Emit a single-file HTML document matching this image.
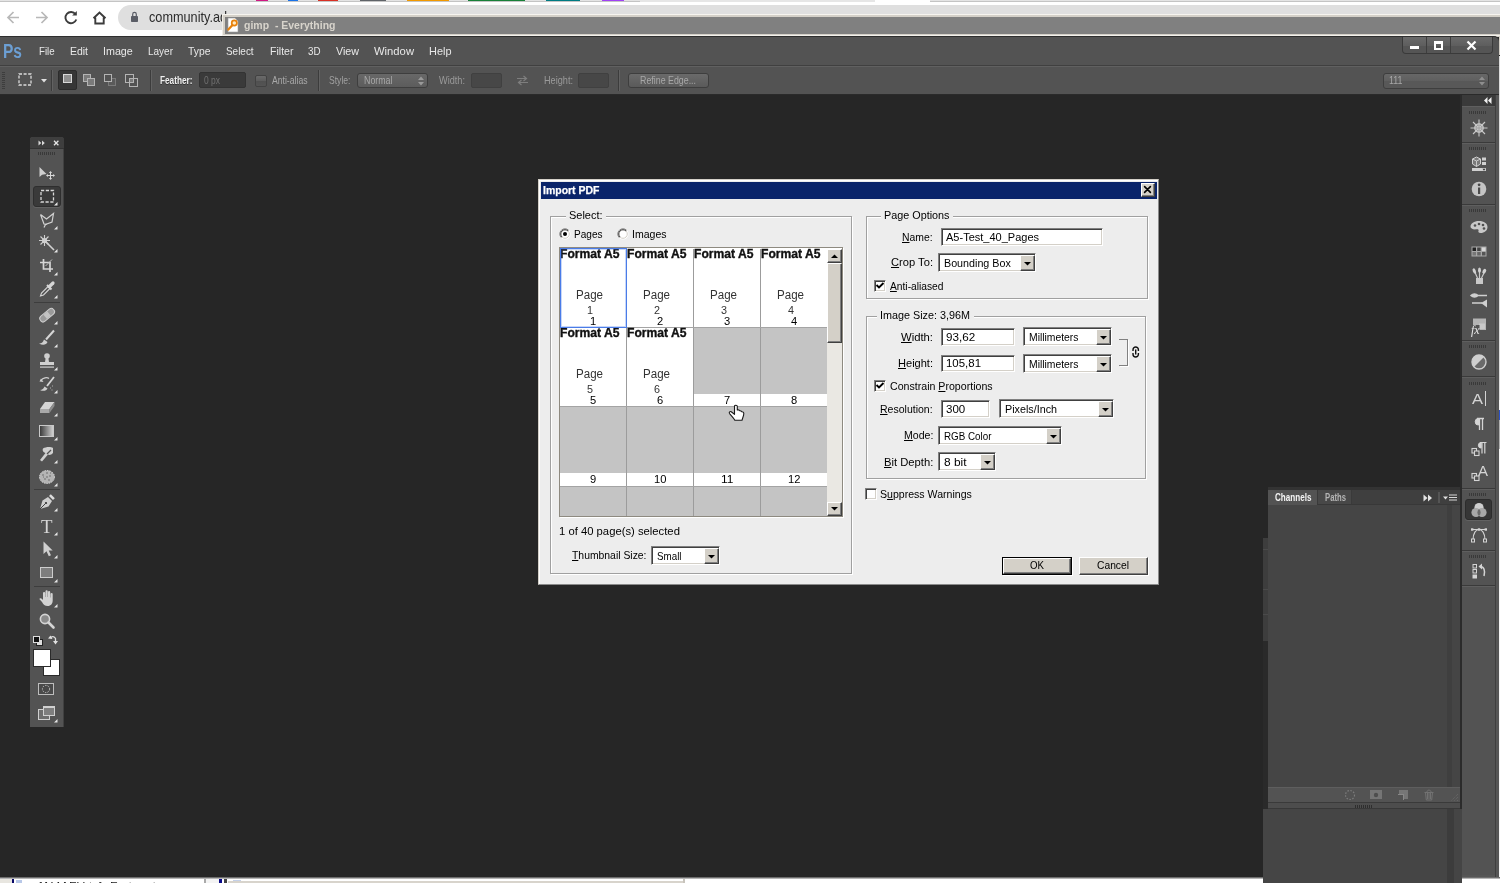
<!DOCTYPE html>
<html>
<head>
<meta charset="utf-8">
<title>Import PDF</title>
<style>
*{box-sizing:border-box;margin:0;padding:0}
html,body{width:1500px;height:883px;overflow:hidden;background:#262626;font-family:"Liberation Sans",sans-serif;}
.abs{position:absolute}
.t{position:absolute;white-space:pre;transform-origin:0 50%;display:block}
.sf{font-family:"Liberation Serif",serif}
.t u{text-decoration:underline;text-underline-offset:1px}
svg{position:absolute;overflow:visible}
#root{will-change:transform;position:absolute;left:0;top:0;width:1500px;height:883px;overflow:hidden;background:#262626}
/* win classic bits */
.sunk{background:#fff;border:1px solid;border-color:#808080 #fff #fff #808080;box-shadow:inset 1px 1px 0 #404040,inset -1px -1px 0 #d4d0c8}
.btn{background:#d4d0c8;border:1px solid;border-color:#fff #404040 #404040 #fff;box-shadow:inset -1px -1px 0 #808080,inset 1px 1px 0 #d4d0c8}
.grp{border:1px solid #a0a0a0;box-shadow:inset 1px 1px 0 #fff,1px 1px 0 #fff}
.chk{background:#fff;border:1px solid;border-color:#808080 #fff #fff #808080;box-shadow:inset 1px 1px 0 #404040,inset -1px -1px 0 #d4d0c8}
</style>
</head>
<body>
<div id="root">
<div class="abs " style="left:0px;top:0px;width:1500px;height:37px;background:#fff"></div>
<div class="abs " style="left:0px;top:0px;width:1500px;height:1px;background:#e4e4e4"></div>
<div class="abs " style="left:0px;top:1px;width:1500px;height:1px;background:#c4c4c4"></div>
<div class="abs " style="left:256px;top:0px;width:12px;height:1.4px;background:#d01884"></div>
<div class="abs " style="left:288px;top:0px;width:10px;height:1.4px;background:#1a73e8"></div>
<div class="abs " style="left:318px;top:0px;width:20px;height:1.4px;background:#d93025"></div>
<div class="abs " style="left:360px;top:0px;width:26px;height:1.4px;background:#5f6368"></div>
<div class="abs " style="left:407px;top:0px;width:42px;height:1.4px;background:#f29900"></div>
<div class="abs " style="left:468px;top:0px;width:57px;height:1.4px;background:#188038"></div>
<div class="abs " style="left:546px;top:0px;width:34px;height:1.4px;background:#007b83"></div>
<div class="abs " style="left:602px;top:0px;width:22px;height:1.4px;background:#a142f4"></div>
<div class="abs " style="left:640px;top:0px;width:235px;height:2px;background:#e6e6e6"></div>
<div class="abs " style="left:875px;top:0px;width:55px;height:2px;background:#fff"></div>
<div class="abs " style="left:118px;top:5px;width:1402px;height:25px;background:#dfdfdf;border-radius:13px"></div>
<svg style="left:0;top:0" width="120" height="36" viewBox="0 0 120 36" fill="none" stroke-linecap="butt">
<g stroke="#b8b8b8" stroke-width="1.7"><path d="M19 17.5H8M13.5 12l-5.5 5.5 5.5 5.5"/><path d="M36 17.5h11M41.500 12l5.500 5.500-5.500 5.500"/></g>
<g stroke="#3c3c3c" stroke-width="1.9"><path d="M75.500 14.200A5.600 5.600 0 1 0 76.300 19.500"/><path d="M76.800 11v4.600h-4.600" fill="#3c3c3c" stroke="none"/>
<path d="M93.500 18.200L99.500 12.500l6 5.700M95.300 17.500v6h8.400v-6" stroke-linejoin="miter"/></g>
<g><rect x="131" y="16" width="7" height="6" rx="0.800" fill="#5a5d66"/><path d="M132.700 16v-1.800a1.800 1.800 0 0 1 3.600 0V16" stroke="#5a5d66" stroke-width="1.200"/></g>
</svg>
<span class="t" style="left:149.0px;top:10.4px;font-size:14.5px;line-height:14.5px;color:#2a2a2a;transform:scaleX(0.8753);">community.ad</span>
<div class="abs " style="left:222px;top:14px;width:1278px;height:23px;background:#d4d0c8;border-left:1px solid #efece6;border-top:1px solid #f6f4ef"></div>
<div class="abs " style="left:225px;top:17px;width:1275px;height:17px;background:#808080"></div>
<div class="abs " style="left:223px;top:35px;width:1277px;height:1px;background:#f3f1ec"></div>
<svg style="left:226px;top:17px" width="14" height="16" viewBox="0 0 14 16"><path d="M2 1h7l3 3v11H2z" fill="#fff" stroke="#9a9a9a" stroke-width=".6"/><circle cx="8.300" cy="6" r="2.600" fill="#ffe9c4" stroke="#e8820c" stroke-width="1.700"/><path d="M6.300 8.200L2.300 12.600" stroke="#e8820c" stroke-width="2.200" stroke-linecap="round"/></svg>
<span class="t" style="left:243.5px;top:19.9px;font-size:11.5px;line-height:11.5px;color:#d8d4cc;font-weight:bold;transform:scaleX(0.9121);">gimp  - Everything</span>
<div class="abs " style="left:0px;top:36px;width:1499px;height:30px;background:#535353;border-top:1px solid #2e2e2e;border-bottom:1px solid #404040;border-top-right-radius:5px"></div>
<div class="abs " style="left:1499px;top:36px;width:1px;height:847px;background:#f4f4f4"></div>
<div class="abs " style="left:1499px;top:36px;width:1px;height:19px;background:#d4d0c8"></div>
<div class="abs " style="left:1499px;top:55px;width:1px;height:1px;background:#222"></div>
<div class="abs " style="left:1499px;top:56px;width:1px;height:344px;background:#dcdcdc"></div>
<div class="abs " style="left:1499px;top:410px;width:1px;height:10px;background:#2a50c8"></div>
<div class="abs " style="left:1499px;top:420px;width:1px;height:29px;background:#b0b0b0"></div>
<div class="abs " style="left:0px;top:66px;width:1499px;height:29px;background:#535353;border-top:1px solid #606060;border-bottom:1px solid #2a2a2a"></div>
<span class="t" style="left:3.0px;top:40.7px;font-size:20px;line-height:20px;color:#6c9fd4;font-weight:bold;transform:scaleX(0.7766);">Ps</span>
<span class="t" style="left:39.4px;top:45.9px;font-size:11.5px;line-height:11.5px;color:#e8e8e8;transform:scaleX(0.8418);">File</span>
<span class="t" style="left:70.0px;top:45.9px;font-size:11.5px;line-height:11.5px;color:#e8e8e8;transform:scaleX(0.9083);">Edit</span>
<span class="t" style="left:102.6px;top:45.9px;font-size:11.5px;line-height:11.5px;color:#e8e8e8;transform:scaleX(0.9323);">Image</span>
<span class="t" style="left:148.0px;top:45.9px;font-size:11.5px;line-height:11.5px;color:#e8e8e8;transform:scaleX(0.8690);">Layer</span>
<span class="t" style="left:188.0px;top:45.9px;font-size:11.5px;line-height:11.5px;color:#e8e8e8;transform:scaleX(0.8984);">Type</span>
<span class="t" style="left:226.4px;top:45.9px;font-size:11.5px;line-height:11.5px;color:#e8e8e8;transform:scaleX(0.8635);">Select</span>
<span class="t" style="left:270.0px;top:45.9px;font-size:11.5px;line-height:11.5px;color:#e8e8e8;transform:scaleX(0.9195);">Filter</span>
<span class="t" style="left:307.5px;top:45.9px;font-size:11.5px;line-height:11.5px;color:#e8e8e8;transform:scaleX(0.8503);">3D</span>
<span class="t" style="left:336.0px;top:45.9px;font-size:11.5px;line-height:11.5px;color:#e8e8e8;transform:scaleX(0.9304);">View</span>
<span class="t" style="left:374.0px;top:45.9px;font-size:11.5px;line-height:11.5px;color:#e8e8e8;transform:scaleX(0.9779);">Window</span>
<span class="t" style="left:429.0px;top:45.9px;font-size:11.5px;line-height:11.5px;color:#e8e8e8;transform:scaleX(0.9513);">Help</span>
<div class="abs " style="left:1402px;top:37px;width:91px;height:17px;background:linear-gradient(#6a6a6a,#5e5e5e 55%,#555 56%,#555);border:1px solid #3a3a3a;border-top:none;border-radius:0 0 4px 4px"></div>
<div class="abs " style="left:1426px;top:37px;width:1px;height:16px;background:#3e3e3e"></div>
<div class="abs " style="left:1450px;top:37px;width:1px;height:16px;background:#3e3e3e"></div>
<div class="abs " style="left:1410px;top:46px;width:9px;height:3px;background:#fff"></div>
<div class="abs " style="left:1434px;top:41px;width:9px;height:9px;border:2px solid #fff;border-top-width:3px"></div>
<svg style="left:1466px;top:41px" width="11" height="9" viewBox="0 0 11 9"><path d="M1.500 .5l8 8M9.500 .5l-8 8" stroke="#fff" stroke-width="2.200"/></svg>
<div class="abs " style="left:2px;top:72px;width:3px;height:17px;background:repeating-linear-gradient(#3b3b3b 0 1px,transparent 1px 2px);opacity:.9"></div>
<svg style="left:18px;top:73px" width="14" height="13" viewBox="0 0 14 13"><rect x="1" y="1" width="12" height="11" fill="none" stroke="#dcdcdc" stroke-width="1.300" stroke-dasharray="3 1.600"/></svg>
<svg style="left:41px;top:79px" width="6" height="4" viewBox="0 0 6 4"><path d="M0 0h6L3 3.500z" fill="#e0e0e0"/></svg>
<div class="abs " style="left:51px;top:70px;width:1px;height:21px;background:#3c3c3c"></div>
<div class="abs " style="left:52px;top:70px;width:1px;height:21px;background:#626262"></div>
<div class="abs " style="left:58px;top:70px;width:19px;height:20px;background:#363636;border:1px solid #2c2c2c;border-radius:2px"></div>
<div class="abs " style="left:63px;top:74px;width:9px;height:9px;background:#8f8f8f;border:1px solid #d8d8d8"></div>
<div class="abs " style="left:83px;top:74px;width:8px;height:8px;background:#7a7a7a;border:1px solid #b4b4b4"></div>
<div class="abs " style="left:87px;top:78px;width:8px;height:8px;background:#7a7a7a;border:1px solid #b4b4b4"></div>
<div class="abs " style="left:108px;top:78px;width:8px;height:8px;background:#5a5a5a;border:1px solid #7a7a7a"></div>
<div class="abs " style="left:104px;top:74px;width:8px;height:8px;background:#535353;border:1px solid #b4b4b4"></div>
<div class="abs " style="left:125px;top:74px;width:9px;height:9px;border:1px solid #b4b4b4"></div>
<div class="abs " style="left:129px;top:78px;width:9px;height:9px;border:1px solid #b4b4b4"></div>
<div class="abs " style="left:129px;top:78px;width:5px;height:5px;background:#7a7a7a;border:1px solid #b4b4b4"></div>
<div class="abs " style="left:150px;top:70px;width:1px;height:21px;background:#3c3c3c"></div>
<div class="abs " style="left:151px;top:70px;width:1px;height:21px;background:#626262"></div>
<span class="t" style="left:160.0px;top:74.9px;font-size:10.5px;line-height:10.5px;color:#f0f0f0;font-weight:bold;transform:scaleX(0.7845);text-shadow:0 1px 0 #333;">Feather:</span>
<div class="abs " style="left:199px;top:72px;width:47px;height:16px;background:#3a3a3a;border:1px solid #333;border-radius:2px"></div>
<span class="t" style="left:204.0px;top:75.4px;font-size:10.5px;line-height:10.5px;color:#707070;transform:scaleX(0.8062);">0 px</span>
<div class="abs " style="left:255px;top:75px;width:12px;height:12px;background:linear-gradient(#6a6a6a,#5c5c5c 50%,#505050 51%,#545454);border:1px solid #424242;border-radius:2px"></div>
<span class="t" style="left:271.5px;top:74.9px;font-size:10.5px;line-height:10.5px;color:#a8a8a8;transform:scaleX(0.8220);">Anti-alias</span>
<div class="abs " style="left:318px;top:70px;width:1px;height:21px;background:#3c3c3c"></div>
<div class="abs " style="left:319px;top:70px;width:1px;height:21px;background:#626262"></div>
<span class="t" style="left:328.5px;top:74.9px;font-size:10.5px;line-height:10.5px;color:#a0a0a0;transform:scaleX(0.8187);">Style:</span>
<div class="abs " style="left:357px;top:73px;width:71px;height:15px;background:linear-gradient(#686868,#5c5c5c);border:1px solid #3e3e3e;border-radius:3px"></div>
<span class="t" style="left:364.0px;top:75.4px;font-size:10.5px;line-height:10.5px;color:#a8a8a8;transform:scaleX(0.8422);">Normal</span>
<svg style="left:418px;top:76px" width="6" height="10" viewBox="0 0 6 10"><path d="M0 4h6L3 .5zM0 6h6L3 9.500z" fill="#9a9a9a"/></svg>
<span class="t" style="left:439.0px;top:74.9px;font-size:10.5px;line-height:10.5px;color:#9a9a9a;transform:scaleX(0.8737);">Width:</span>
<div class="abs " style="left:471px;top:73px;width:31px;height:15px;background:#474747;border:1px solid #404040;border-radius:2px"></div>
<svg style="left:516px;top:75px" width="13" height="11" viewBox="0 0 13 11"><path d="M1 3.500h9M7.500 1l3 2.500-3 2.500M12 7.500H3M5.500 5l-3 2.500 3 2.500" fill="none" stroke="#7e7e7e" stroke-width="1.200"/></svg>
<span class="t" style="left:544.0px;top:74.9px;font-size:10.5px;line-height:10.5px;color:#9a9a9a;transform:scaleX(0.8717);">Height:</span>
<div class="abs " style="left:578px;top:73px;width:31px;height:15px;background:#474747;border:1px solid #404040;border-radius:2px"></div>
<div class="abs " style="left:618px;top:70px;width:1px;height:21px;background:#3c3c3c"></div>
<div class="abs " style="left:619px;top:70px;width:1px;height:21px;background:#626262"></div>
<div class="abs " style="left:628px;top:73px;width:81px;height:15px;background:linear-gradient(#6a6a6a,#5a5a5a);border:1px solid #3e3e3e;border-radius:3px"></div>
<span class="t" style="left:640.0px;top:74.9px;font-size:10.5px;line-height:10.5px;color:#a8a8a8;transform:scaleX(0.8416);">Refine Edge...</span>
<div class="abs " style="left:1383px;top:73px;width:106px;height:16px;background:linear-gradient(#676767,#5f5f5f 50%,#585858 51%,#585858);border:1px solid #3e3e3e;border-radius:3px"></div>
<span class="t" style="left:1389.0px;top:76.1px;font-size:10px;line-height:10px;color:#a8a8a8;transform:scaleX(0.8881);">111</span>
<svg style="left:1479px;top:76px" width="6" height="10" viewBox="0 0 6 10"><path d="M0 4h6L3 .5zM0 6h6L3 9.500z" fill="#8e8e8e"/></svg>
<div class="abs " style="left:30px;top:137px;width:34px;height:590px;background:#535353;border-radius:3px 3px 0 0;border-right:1px solid #404040"></div>
<div class="abs " style="left:30px;top:137px;width:34px;height:12px;background:#3e3e3e;border-radius:3px 3px 0 0;border-bottom:1px solid #333"></div>
<svg style="left:37px;top:139px" width="24" height="8" viewBox="0 0 24 8"><path d="M1.500 1.500l2.800 2.500-2.800 2.500zM5 1.500l2.800 2.500-2.800 2.500z" fill="#d8d8d8"/><path d="M17 1.800l4.400 4.400M21.400 1.800l-4.400 4.400" stroke="#e4e4e4" stroke-width="1.300"/></svg>
<div class="abs " style="left:38px;top:152px;width:18px;height:3px;background:repeating-linear-gradient(90deg,#393939 0 1px,transparent 1px 2px)"></div>
<svg style="left:38px;top:164px" width="18" height="18" viewBox="0 0 18 18" fill="none"><path d="M1.500 3l0 10 2.600-2.300 4.400-.7z" fill="#cfcfcf"/><path d="M12.500 8v7M9 11.500h7" stroke="#d8d8d8" stroke-width="1"/><path d="M12.500 7l-1.600 1.900h3.200zM12.500 16l-1.600-1.900h3.200zM8 11.500l1.900-1.600v3.200zM17 11.500l-1.900-1.600v3.200z" fill="#d8d8d8"/></svg>
<div class="abs " style="left:33px;top:186px;width:28px;height:21px;background:#3a3a3a;border:1px solid #2e2e2e;border-radius:3px;box-shadow:0 1px 0 #626262"></div>
<svg style="left:38px;top:187px" width="18" height="18" viewBox="0 0 18 18" fill="none"><rect x="3" y="3.500" width="12.500" height="11.500" stroke="#d8d8d8" stroke-width="1.300" stroke-dasharray="3.200 1.600"/></svg>
<svg style="left:54px;top:201.5px" width="4" height="4" viewBox="0 0 4 4"><path d="M3.500 0v3.500H0z" fill="#e6e6e6"/></svg>
<svg style="left:38px;top:211px" width="18" height="18" viewBox="0 0 18 18" fill="none"><path d="M2.500 3.500l6 4.500 7-5.500-1.500 8.500-6.500 2.500-1.500 3M2.500 3.500l3.500 9.500 3 .5" stroke="#d2d2d2" stroke-width="1.200"/></svg>
<svg style="left:54px;top:225.5px" width="4" height="4" viewBox="0 0 4 4"><path d="M3.500 0v3.500H0z" fill="#e6e6e6"/></svg>
<svg style="left:38px;top:234px" width="18" height="18" viewBox="0 0 18 18" fill="none"><path d="M7 7l9 9" stroke="#d2d2d2" stroke-width="1.600"/><path d="M6.500 1v11M1 6.500h11M2.500 2.500l8 8M10.500 2.500l-8 8" stroke="#cfcfcf" stroke-width="1.100"/><circle cx="6.500" cy="6.500" r="2.600" fill="#cfcfcf"/></svg>
<svg style="left:54px;top:248.5px" width="4" height="4" viewBox="0 0 4 4"><path d="M3.500 0v3.500H0z" fill="#e6e6e6"/></svg>
<svg style="left:38px;top:257px" width="18" height="18" viewBox="0 0 18 18" fill="none"><path d="M5.500 2v10h9.500M2 5.500h10v9.500" stroke="#d6d6d6" stroke-width="1.700"/><path d="M14 2.500l-6.500 6.500" stroke="#bdbdbd" stroke-width="1"/></svg>
<svg style="left:54px;top:271.5px" width="4" height="4" viewBox="0 0 4 4"><path d="M3.500 0v3.500H0z" fill="#e6e6e6"/></svg>
<svg style="left:38px;top:280px" width="18" height="18" viewBox="0 0 18 18" fill="none"><path d="M2.500 16l1-3 6.500-6.500 2 2-6.500 6.500z" stroke="#d6d6d6" stroke-width="1.100"/><path d="M9 5l4.500 4.500" stroke="#d6d6d6" stroke-width="2"/><path d="M11.500 6.500l3.500-3.500" stroke="#d6d6d6" stroke-width="3.200" stroke-linecap="round"/></svg>
<svg style="left:54px;top:294.5px" width="4" height="4" viewBox="0 0 4 4"><path d="M3.500 0v3.500H0z" fill="#e6e6e6"/></svg>
<div class="abs " style="left:34px;top:302px;width:26px;height:1px;background:#3d3d3d"></div>
<svg style="left:38px;top:306px" width="18" height="18" viewBox="0 0 18 18" fill="none"><rect x=".5" y="6" width="17" height="6.500" rx="3" transform="rotate(-40 9 9)" fill="#9a9a9a" stroke="#cdcdcd" stroke-width="1"/><rect x="6.500" y="6.500" width="5" height="5.500" transform="rotate(-40 9 9)" fill="#c4c4c4"/></svg>
<svg style="left:54px;top:320.5px" width="4" height="4" viewBox="0 0 4 4"><path d="M3.500 0v3.500H0z" fill="#e6e6e6"/></svg>
<svg style="left:38px;top:329px" width="18" height="18" viewBox="0 0 18 18" fill="none"><path d="M16 1.500L8 10.500" stroke="#d6d6d6" stroke-width="2"/><path d="M1 14.500c3 0 4-1.500 5-4l3.500 2.500c-1 3-5 3.500-8.500 1.500z" fill="#cfcfcf"/></svg>
<svg style="left:54px;top:343.5px" width="4" height="4" viewBox="0 0 4 4"><path d="M3.500 0v3.500H0z" fill="#e6e6e6"/></svg>
<svg style="left:38px;top:352px" width="18" height="18" viewBox="0 0 18 18" fill="none"><circle cx="9" cy="4" r="2.800" fill="#cfcfcf"/><path d="M7.800 5h2.400l.8 5h-4z" fill="#cfcfcf"/><rect x="2" y="10" width="14" height="3" fill="#cfcfcf"/><rect x="2" y="14.500" width="14" height="1.200" fill="#cfcfcf"/></svg>
<svg style="left:54px;top:366.5px" width="4" height="4" viewBox="0 0 4 4"><path d="M3.500 0v3.500H0z" fill="#e6e6e6"/></svg>
<svg style="left:38px;top:375px" width="18" height="18" viewBox="0 0 18 18" fill="none"><path d="M16 2L9 11" stroke="#d6d6d6" stroke-width="1.800"/><path d="M2 15c2.500 0 3.500-1.500 4.500-3.500l3 2c-1 2.500-4.500 3-7.500 1.500z" fill="#cfcfcf"/><path d="M3 5.500c2-3 6-3.500 8-2" stroke="#cfcfcf" stroke-width="1.300"/><path d="M1.500 6.500l4 .5-2.500-3.500z" fill="#cfcfcf"/><path d="M12 13l1 0M14 11l1 0M13.500 15l1 0" stroke="#b0b0b0"/></svg>
<svg style="left:54px;top:389.5px" width="4" height="4" viewBox="0 0 4 4"><path d="M3.500 0v3.500H0z" fill="#e6e6e6"/></svg>
<svg style="left:38px;top:398px" width="18" height="18" viewBox="0 0 18 18" fill="none"><path d="M2 11l5-7h9.500l-5 7z" fill="#d4d4d4"/><path d="M2 11h9.500v4H2z" fill="#a8a8a8"/><path d="M11.500 11l5-7v4l-5 7z" fill="#8c8c8c"/></svg>
<svg style="left:54px;top:412.5px" width="4" height="4" viewBox="0 0 4 4"><path d="M3.500 0v3.500H0z" fill="#e6e6e6"/></svg>
<div class="abs" style="left:39px;top:425px;width:15px;height:12px;border:1px solid #c8c8c8;background:linear-gradient(90deg,#3a3a3a,#d0d0d0)"></div>
<svg style="left:54px;top:436.5px" width="4" height="4" viewBox="0 0 4 4"><path d="M3.500 0v3.500H0z" fill="#e6e6e6"/></svg>
<svg style="left:38px;top:445px" width="18" height="18" viewBox="0 0 18 18" fill="none"><path d="M5 3.500c3-2 8-2 10-.5v5c-1.500 2-4 2.500-5 1.500l-6 7-2-1.500 5.500-7c-2-.5-3.500-2.500-2.500-4.500z" fill="#cfcfcf"/><path d="M9 9l4-4" stroke="#535353" stroke-width="1.200"/></svg>
<svg style="left:54px;top:459.5px" width="4" height="4" viewBox="0 0 4 4"><path d="M3.500 0v3.500H0z" fill="#e6e6e6"/></svg>
<svg style="left:38px;top:468px" width="18" height="18" viewBox="0 0 18 18" fill="none"><ellipse cx="9" cy="9" rx="7.500" ry="6.500" fill="#b4b4b4"/><ellipse cx="9" cy="9" rx="7.500" ry="6.500" fill="none" stroke="#d8d8d8" stroke-width="1" stroke-dasharray="1.500 1"/><path d="M4 7h2M8 5h2M11 8h2M6 11h2M10 12h2M12 5h1M5 9h1M8 9h2" stroke="#6e6e6e" stroke-width="1"/></svg>
<svg style="left:54px;top:482.5px" width="4" height="4" viewBox="0 0 4 4"><path d="M3.500 0v3.500H0z" fill="#e6e6e6"/></svg>
<div class="abs " style="left:34px;top:489px;width:26px;height:1px;background:#3d3d3d"></div>
<svg style="left:38px;top:493px" width="18" height="18" viewBox="0 0 18 18" fill="none"><path d="M2 16l2.500-8.500 5.500-3.500 4 4-3.500 5.500z" fill="#cfcfcf"/><path d="M11 3l4 4 1.800-1.800-4-4z" fill="#dcdcdc"/><path d="M2 16l5.500-5.500" stroke="#444" stroke-width="1"/><circle cx="8" cy="10" r="1.100" fill="#333"/></svg>
<svg style="left:54px;top:507.5px" width="4" height="4" viewBox="0 0 4 4"><path d="M3.500 0v3.500H0z" fill="#e6e6e6"/></svg>
<span class="t sf" style="left:41.0px;top:516.7px;font-size:19px;line-height:19px;color:#d6d6d6;transform:scaleX(0.9908);">T</span>
<svg style="left:54px;top:531.5px" width="4" height="4" viewBox="0 0 4 4"><path d="M3.500 0v3.500H0z" fill="#e6e6e6"/></svg>
<svg style="left:38px;top:540px" width="18" height="18" viewBox="0 0 18 18" fill="none"><path d="M5.500 1.500v12.500l3-2.800 2.300 5 2.200-1-2.300-4.800h4z" fill="#cfcfcf"/></svg>
<svg style="left:54px;top:554.5px" width="4" height="4" viewBox="0 0 4 4"><path d="M3.500 0v3.500H0z" fill="#e6e6e6"/></svg>
<div class="abs " style="left:40px;top:567px;width:13px;height:11px;background:#7e7e7e;border:1px solid #cdcdcd"></div>
<svg style="left:54px;top:578.5px" width="4" height="4" viewBox="0 0 4 4"><path d="M3.500 0v3.500H0z" fill="#e6e6e6"/></svg>
<div class="abs " style="left:34px;top:586px;width:26px;height:1px;background:#3d3d3d"></div>
<svg style="left:38px;top:589px" width="18" height="18" viewBox="0 0 18 18" fill="none"><path d="M5 9.500V4a1.100 1.100 0 0 1 2.200 0v4h.3V2.300a1.100 1.100 0 0 1 2.200 0V8h.3V3a1.100 1.100 0 0 1 2.200 0v5.500h.3V5a1.100 1.100 0 0 1 2.200 0v6.500c0 3-1.700 5.500-5 5.500-3 0-4.300-1.500-5.700-4L1.300 10c.8-1.200 2.200-.8 3.700 1z" fill="#d2d2d2"/></svg>
<svg style="left:54px;top:603.5px" width="4" height="4" viewBox="0 0 4 4"><path d="M3.500 0v3.500H0z" fill="#e6e6e6"/></svg>
<svg style="left:38px;top:612px" width="18" height="18" viewBox="0 0 18 18" fill="none"><circle cx="7" cy="7" r="4.600" fill="#8a8a8a" stroke="#d4d4d4" stroke-width="1.600"/><path d="M10.500 10.500l5 5" stroke="#d4d4d4" stroke-width="2.600" stroke-linecap="round"/></svg>
<div class="abs " style="left:36px;top:639px;width:7px;height:7px;background:#ddd;border:1px solid #222"></div>
<div class="abs " style="left:33px;top:636px;width:7px;height:7px;background:#111;border:1px solid #ddd"></div>
<svg style="left:48px;top:634px" width="11" height="11" viewBox="0 0 11 11" fill="none"><path d="M2.500 4c1-2 4-2 5 .5v3" stroke="#e0e0e0" stroke-width="1.300"/><path d="M0 4.500l2.500-3 2 3.500zM5 7h5l-2.500 3.500z" fill="#e0e0e0"/></svg>
<div class="abs " style="left:43px;top:659px;width:17px;height:17px;background:#fff;border:1px solid #2a2a2a;box-shadow:inset 0 0 0 1px #fff"></div>
<div class="abs " style="left:33px;top:649px;width:18px;height:18px;background:#fff;border:1px solid #2a2a2a"></div>
<div class="abs " style="left:38px;top:683px;width:16px;height:12px;border:1px solid #bdbdbd;background:#4a4a4a"></div>
<svg style="left:41px;top:684px" width="10" height="10" viewBox="0 0 10 10"><circle cx="5" cy="5" r="3.600" fill="none" stroke="#c8c8c8" stroke-width="1" stroke-dasharray="1.400 1.200"/></svg>
<div class="abs " style="left:38px;top:709px;width:12px;height:11px;background:#6e6e6e;border:1px solid #d0d0d0"></div>
<div class="abs " style="left:43px;top:706px;width:12px;height:10px;background:#7e7e7e;border:1px solid #d0d0d0;border-top-width:2px"></div>
<svg style="left:54px;top:718.5px" width="4" height="4" viewBox="0 0 4 4"><path d="M3.500 0v3.500H0z" fill="#e6e6e6"/></svg>
<div class="abs " style="left:1460px;top:95px;width:39px;height:782px;background:#565656;border-left:2px solid #2b2b2b"></div>
<div class="abs " style="left:1462px;top:95px;width:33px;height:780px;background:#535353"></div>
<div class="abs " style="left:1495px;top:95px;width:1px;height:782px;background:#3f3f3f"></div>
<div class="abs " style="left:1462px;top:95px;width:33px;height:11px;background:#3a3a3a"></div>
<svg style="left:1484px;top:97px" width="8" height="7" viewBox="0 0 8 7"><path d="M3.500 0v7L0 3.500zM7.500 0v7L4 3.500z" fill="#f0f0f0"/></svg>
<div class="abs " style="left:1462px;top:106px;width:33px;height:1px;background:#5f5f5f"></div>
<div class="abs " style="left:1469px;top:111px;width:18px;height:3px;background:repeating-linear-gradient(90deg,#393939 0 1px,transparent 1px 2px)"></div>
<svg style="left:1470px;top:118.5px" width="18" height="18" viewBox="0 0 18 18" fill="none"><circle cx="9" cy="9" r="4.200" stroke="#c8c8c8" stroke-width="1.300" fill="#8a8a8a"/><path d="M9 .5v17M.5 9h17M3 3l12 12M15 3L3 15" stroke="#c8c8c8" stroke-width="1.100"/><circle cx="9" cy="9" r="1.600" fill="#aaa"/></svg>
<div class="abs " style="left:1462px;top:142px;width:33px;height:1px;background:#3a3a3a"></div><div class="abs " style="left:1462px;top:143px;width:33px;height:1px;background:#5f5f5f"></div>
<div class="abs " style="left:1469px;top:147px;width:18px;height:3px;background:repeating-linear-gradient(90deg,#393939 0 1px,transparent 1px 2px)"></div>
<svg style="left:1470px;top:154.5px" width="18" height="18" viewBox="0 0 18 18" fill="none"><path d="M6.500 2l4 2v5l-4 2.500-4-2.500V4z" stroke="#d0d0d0" stroke-width="1" fill="#7a7a7a"/><path d="M2.500 4l4 2 4-2M6.500 6v5.500" stroke="#d0d0d0" stroke-width=".9"/><rect x="12" y="2.500" width="4" height="3" fill="#d0d0d0"/><rect x="12" y="7" width="4" height="3" fill="#d0d0d0"/><rect x="2" y="13" width="14" height="3" fill="#d0d0d0"/><path d="M12.500 13.700h3l-1.500 2z" fill="#333"/></svg>
<svg style="left:1470px;top:180px" width="18" height="18" viewBox="0 0 18 18" fill="none"><circle cx="9" cy="9" r="7.300" fill="#c4c4c4"/><rect x="8" y="7.500" width="2.200" height="6.500" fill="#4a4a4a"/><circle cx="9.100" cy="4.800" r="1.400" fill="#4a4a4a"/></svg>
<div class="abs " style="left:1462px;top:204px;width:33px;height:1px;background:#3a3a3a"></div><div class="abs " style="left:1462px;top:205px;width:33px;height:1px;background:#5f5f5f"></div>
<div class="abs " style="left:1469px;top:209px;width:18px;height:3px;background:repeating-linear-gradient(90deg,#393939 0 1px,transparent 1px 2px)"></div>
<svg style="left:1470px;top:218px" width="18" height="18" viewBox="0 0 18 18" fill="none"><path d="M9 3c5 0 8.500 2.500 8.500 6 0 3.500-3 6-7 6-2 0-2.500-1.200-2-2.200.5-1.200-.5-1.800-2-1.500C3 11.800.5 10.500.5 8.500.5 5.500 4 3 9 3z" fill="#c8c8c8"/><circle cx="5" cy="7.500" r="1.300" fill="#505050"/><circle cx="9" cy="6" r="1.300" fill="#505050"/><circle cx="13" cy="7" r="1.300" fill="#505050"/><circle cx="14" cy="10.500" r="1.300" fill="#505050"/></svg>
<svg style="left:1470px;top:242px" width="18" height="18" viewBox="0 0 18 18" fill="none"><rect x="1.500" y="4.500" width="15" height="10" fill="#a8a8a8"/><rect x="2.500" y="5.500" width="3.500" height="3.500" fill="#222"/><rect x="7.200" y="5.500" width="3.500" height="3.500" fill="#444"/><rect x="12" y="5.500" width="3.500" height="3.500" fill="#d8d8d8"/><rect x="2.500" y="10" width="3.500" height="3.500" fill="#777"/><rect x="7.200" y="10" width="3.500" height="3.500" fill="#666"/><rect x="12" y="10" width="3.500" height="3.500" fill="#555"/></svg>
<svg style="left:1470px;top:267px" width="18" height="18" viewBox="0 0 18 18" fill="none"><path d="M6 11h7v6H6z" fill="#c8c8c8"/><path d="M7.500 11L5 5.500M9.500 11V5M11.500 11l2.500-5" stroke="#c8c8c8" stroke-width="1.200"/><ellipse cx="4.300" cy="4" rx="1.500" ry="2.800" transform="rotate(-22 4.300 4)" fill="#d0d0d0"/><ellipse cx="9.500" cy="3.200" rx="1.500" ry="2.800" fill="#d0d0d0"/><ellipse cx="14.300" cy="4.300" rx="1.700" ry="2.600" transform="rotate(28 14.300 4.300)" fill="#d0d0d0"/></svg>
<svg style="left:1470px;top:291.5px" width="18" height="18" viewBox="0 0 18 18" fill="none"><path d="M1 3.500c2-2 5-2 7 0-2 2-5 2-7 0zM8 3.500h9" stroke="#cfcfcf" stroke-width="1.500" fill="#cfcfcf"/><path d="M2 11h10" stroke="#cfcfcf" stroke-width="1.500"/><path d="M11 11l6-3.500v8z" fill="#cfcfcf"/></svg>
<svg style="left:1470px;top:316.5px" width="18" height="18" viewBox="0 0 18 18" fill="none"><rect x="3" y="1.500" width="13" height="11.500" fill="#b4b4b4"/><rect x="9" y="6.500" width="6" height="5.500" fill="#c8c8c8"/><rect x="1" y="8" width="8.500" height="9" fill="#535353"/></svg>
<span class="t sf" style="left:1471.0px;top:324.4px;font-size:12.5px;line-height:12.5px;color:#e8e8e8;transform:scaleX(0.9603);font-style:italic;">fx</span>
<div class="abs " style="left:1462px;top:340px;width:33px;height:1px;background:#3a3a3a"></div><div class="abs " style="left:1462px;top:341px;width:33px;height:1px;background:#5f5f5f"></div>
<div class="abs " style="left:1469px;top:345px;width:18px;height:3px;background:repeating-linear-gradient(90deg,#393939 0 1px,transparent 1px 2px)"></div>
<svg style="left:1470px;top:353px" width="18" height="18" viewBox="0 0 18 18" fill="none"><circle cx="9" cy="9" r="7" fill="#6a6a6a" stroke="#cfcfcf" stroke-width="1.400"/><path d="M4 14A7 7 0 0 1 14 4z" fill="#cfcfcf"/></svg>
<div class="abs " style="left:1462px;top:376px;width:33px;height:1px;background:#3a3a3a"></div><div class="abs " style="left:1462px;top:377px;width:33px;height:1px;background:#5f5f5f"></div>
<div class="abs " style="left:1469px;top:382px;width:18px;height:3px;background:repeating-linear-gradient(90deg,#393939 0 1px,transparent 1px 2px)"></div>
<span class="t" style="left:1472.0px;top:390.9px;font-size:15.5px;line-height:15.5px;color:#d4d4d4;transform:scaleX(1.0639);">A</span>
<div class="abs " style="left:1484.5px;top:391px;width:1px;height:15px;background:#d4d4d4"></div>
<svg style="left:1470px;top:414.5px" width="18" height="18" viewBox="0 0 18 18" fill="none"><path d="M7 3.500h7M9.500 3.500v11.500M12.500 3.500v11.500" stroke="#d4d4d4" stroke-width="1.300"/><path d="M8.500 3.500a3.300 3.300 0 0 0 0 6.600z" fill="#d4d4d4" stroke="#d4d4d4"/></svg>
<svg style="left:1470px;top:439.5px" width="18" height="18" viewBox="0 0 18 18" fill="none"><path d="M10 2.500h6.500M12 2.500v11M14.800 2.500v11" stroke="#d4d4d4" stroke-width="1.200"/><path d="M11.200 2.500a2.800 2.800 0 0 0 0 5.600z" fill="#d4d4d4" stroke="#d4d4d4"/><rect x="2" y="8.500" width="4.500" height="4.500" stroke="#d4d4d4" stroke-width="1.100"/><rect x="4.500" y="11" width="4.500" height="4.500" stroke="#d4d4d4" stroke-width="1.100" fill="#535353"/></svg>
<span class="t" style="left:1477.5px;top:464.2px;font-size:14px;line-height:14px;color:#d4d4d4;transform:scaleX(1.0708);">A</span>
<svg style="left:1470px;top:464.5px" width="18" height="18" viewBox="0 0 18 18" fill="none"><rect x="2" y="8.500" width="4.500" height="4.500" stroke="#d4d4d4" stroke-width="1.100"/><rect x="4.500" y="11" width="4.500" height="4.500" stroke="#d4d4d4" stroke-width="1.100" fill="#535353"/></svg>
<div class="abs " style="left:1462px;top:488px;width:33px;height:1px;background:#3a3a3a"></div><div class="abs " style="left:1462px;top:489px;width:33px;height:1px;background:#5f5f5f"></div>
<div class="abs " style="left:1469px;top:493px;width:18px;height:3px;background:repeating-linear-gradient(90deg,#393939 0 1px,transparent 1px 2px)"></div>
<div class="abs " style="left:1465px;top:499px;width:27px;height:21px;background:#363636;border:1px solid #2c2c2c;border-radius:3px;box-shadow:0 1px 0 #626262"></div>
<svg style="left:1470px;top:501px" width="18" height="18" viewBox="0 0 18 18" fill="none"><circle cx="9" cy="6.500" r="4.600" fill="#cfcfcf"/><circle cx="6" cy="11.500" r="4.600" fill="#a8a8a8"/><circle cx="12" cy="11.500" r="4.600" fill="#a8a8a8"/><path d="M9 8a4.600 4.600 0 0 1 0 7 4.600 4.600 0 0 1 0-7z" fill="#6a6a6a"/></svg>
<svg style="left:1470px;top:526px" width="18" height="18" viewBox="0 0 18 18" fill="none"><path d="M3 14C3 7 6 3.500 9 3.500S15 7 15 14" stroke="#d4d4d4" stroke-width="1.100"/><path d="M2.500 3.500h13" stroke="#d4d4d4" stroke-width="1"/><rect x="1.500" y="13" width="3" height="3" stroke="#d4d4d4" fill="#535353"/><rect x="13.500" y="13" width="3" height="3" stroke="#d4d4d4" fill="#535353"/><rect x="7.800" y="2.300" width="2.400" height="2.400" fill="#d4d4d4"/><rect x="1" y="2.300" width="2.400" height="2.400" fill="#d4d4d4"/><rect x="14.600" y="2.300" width="2.400" height="2.400" fill="#d4d4d4"/></svg>
<div class="abs " style="left:1462px;top:550px;width:33px;height:1px;background:#3a3a3a"></div><div class="abs " style="left:1462px;top:551px;width:33px;height:1px;background:#5f5f5f"></div>
<div class="abs " style="left:1469px;top:555px;width:18px;height:3px;background:repeating-linear-gradient(90deg,#393939 0 1px,transparent 1px 2px)"></div>
<svg style="left:1470px;top:562px" width="18" height="18" viewBox="0 0 18 18" fill="none"><rect x="3" y="2.500" width="3.500" height="3.500" stroke="#d4d4d4"/><rect x="3" y="7.500" width="3.500" height="3.500" stroke="#d4d4d4"/><rect x="2.500" y="12.500" width="4.500" height="4" fill="#d4d4d4"/><path d="M10 4.500c4 0 5.500 4 4 9.500" stroke="#d4d4d4" stroke-width="1.500"/><path d="M8.500 4.500l3.500-3v6z" fill="#d4d4d4"/></svg>
<div class="abs " style="left:1462px;top:585px;width:33px;height:1px;background:#3a3a3a"></div><div class="abs " style="left:1462px;top:586px;width:33px;height:1px;background:#5f5f5f"></div>
<div class="abs " style="left:1263px;top:538px;width:5px;height:271px;background:#3d3d3d"></div>
<div class="abs " style="left:1263px;top:549px;width:5px;height:1px;background:#4a4a4a"></div>
<div class="abs " style="left:1263px;top:589px;width:5px;height:1px;background:#4a4a4a"></div>
<div class="abs " style="left:1263px;top:614px;width:5px;height:1px;background:#4a4a4a"></div>
<div class="abs " style="left:1263px;top:641px;width:5px;height:1px;background:#4a4a4a"></div>
<div class="abs " style="left:1263px;top:641px;width:5px;height:168px;background:#2a2a2a"></div>
<div class="abs " style="left:1268px;top:487px;width:192px;height:3px;background:#333"></div>
<div class="abs " style="left:1268px;top:490px;width:192px;height:15px;background:#3f3f3f;border-bottom:1px solid #383838"></div>
<div class="abs " style="left:1268px;top:490px;width:49px;height:15px;background:#535353"></div>
<div class="abs " style="left:1317px;top:490px;width:35px;height:14px;background:#484848;border-left:1px solid #3a3a3a;border-right:1px solid #3a3a3a"></div>
<span class="t" style="left:1274.5px;top:492.4px;font-size:10.5px;line-height:10.5px;color:#f4f4f4;font-weight:bold;transform:scaleX(0.7723);">Channels</span>
<span class="t" style="left:1324.5px;top:492.4px;font-size:10.5px;line-height:10.5px;color:#b4b4b4;font-weight:bold;transform:scaleX(0.7344);">Paths</span>
<svg style="left:1423px;top:494px" width="10" height="8" viewBox="0 0 10 8"><path d="M.5 .5l4 3.500-4 3.500zM5 .5l4 3.500-4 3.500z" fill="#e4e4e4"/></svg>
<div class="abs " style="left:1438px;top:492px;width:2px;height:11px;background:#555"></div>
<svg style="left:1443px;top:494px" width="14" height="8" viewBox="0 0 14 8"><path d="M0 2.500h5L2.500 5.500z" fill="#e0e0e0"/><path d="M6 1h8M6 3.500h8M6 6h8" stroke="#d8d8d8" stroke-width="1"/></svg>
<div class="abs " style="left:1268px;top:505px;width:192px;height:282px;background:#454545"></div>
<div class="abs " style="left:1447px;top:505px;width:5px;height:282px;background:#3f3f3f"></div>
<div class="abs " style="left:1268px;top:787px;width:192px;height:16px;background:#535353;border-top:1px solid #5e5e5e;border-bottom:1px solid #3a3a3a"></div>
<svg style="left:1343px;top:788px" width="14" height="14" viewBox="0 0 14 14"><circle cx="7" cy="7" r="4.500" fill="none" stroke="#7c7c7c" stroke-width="1.200" stroke-dasharray="1.500 1.500"/></svg>
<div class="abs " style="left:1370px;top:790px;width:12px;height:9px;background:#757575"></div>
<svg style="left:1373px;top:791.500px" width="6" height="6" viewBox="0 0 6 6"><circle cx="3" cy="3" r="2.200" fill="#4e4e4e"/></svg>
<div class="abs " style="left:1399px;top:790px;width:9px;height:9px;background:#767676"></div>
<div class="abs " style="left:1398px;top:794px;width:6px;height:6px;background:#535353;border-right:1px solid #888;border-top:1px solid #888"></div>
<svg style="left:1423px;top:788px" width="12" height="13" viewBox="0 0 12 13" fill="none"><path d="M1.500 4.500h9M2.500 4.500l.8 7.500h5.400l.8-7.500M4.500 5v6M6 5v6M7.500 5v6" stroke="#727272" stroke-width="1"/><path d="M4 4c0-2.500 4-2.500 4 0" stroke="#727272"/></svg>
<svg style="left:1450px;top:793px" width="9" height="9" viewBox="0 0 9 9"><path d="M8 1L1 8M8 4L4 8M8 7L7 8" stroke="#6a6a6a" stroke-width="1" stroke-dasharray="1 1"/></svg>
<div class="abs " style="left:1268px;top:803px;width:192px;height:6px;background:#4d4d4d;border-bottom:1px solid #383838"></div>
<div class="abs " style="left:1355px;top:805px;width:18px;height:3px;background:repeating-linear-gradient(90deg,#2e2e2e 0 1px,transparent 1px 2px)"></div>
<div class="abs " style="left:1263px;top:809px;width:199px;height:74px;background:#454545"></div>
<div class="abs " style="left:1447px;top:809px;width:7px;height:74px;background:#3c3c3c"></div>
<div class="abs " style="left:538px;top:179px;width:621px;height:406px;background:#ededed;border:1px solid;border-color:#d4d0c8 #8a8a8a #8a8a8a #d4d0c8;box-shadow:inset 1px 1px 0 #fff"></div>
<div class="abs " style="left:541px;top:182px;width:616px;height:17px;background:#0a246a"></div>
<span class="t" style="left:542.5px;top:184.9px;font-size:11.5px;line-height:11.5px;color:#fff;font-weight:bold;transform:scaleX(0.9117);-webkit-text-stroke:.25px #fff;">Import PDF</span>
<div class="abs btn" style="left:1141px;top:183px;width:14px;height:14px;"></div>
<svg style="left:1144px;top:186px" width="7" height="7" viewBox="0 0 7 7"><path d="M.6 .6l5.800 5.800M6.400 .6L.6 6.400" stroke="#000" stroke-width="1.600" stroke-linecap="round"/></svg>
<div class="abs grp" style="left:550px;top:216px;width:302px;height:358px;"></div><div class="abs " style="left:565.5px;top:215px;width:40.5px;height:3px;background:#ededed"></div><span class="t" style="left:568.5px;top:209.9px;font-size:11.5px;line-height:11.5px;color:#000;transform:scaleX(0.9529);">Select:</span>
<svg style="left:558.5px;top:227.5px" width="12" height="12" viewBox="0 0 12 12"><circle cx="6" cy="6" r="5.500" fill="#fff"/><circle cx="6" cy="6" r="4.300" fill="#fff" stroke="#d4d0c8" stroke-width="1"/><path d="M2.300 9.700A5.200 5.200 0 0 1 9.700 2.300" stroke="#808080" stroke-width="1" fill="none"/><path d="M3 9A4.200 4.200 0 0 1 9 3" stroke="#404040" stroke-width="1" fill="none"/><circle cx="6" cy="6" r="2" fill="#000"/></svg>
<span class="t" style="left:573.5px;top:228.9px;font-size:11.5px;line-height:11.5px;color:#000;transform:scaleX(0.8740);">Pages</span>
<svg style="left:616.5px;top:227.5px" width="12" height="12" viewBox="0 0 12 12"><circle cx="6" cy="6" r="5.500" fill="#fff"/><circle cx="6" cy="6" r="4.300" fill="#fff" stroke="#d4d0c8" stroke-width="1"/><path d="M2.300 9.700A5.200 5.200 0 0 1 9.700 2.300" stroke="#808080" stroke-width="1" fill="none"/><path d="M3 9A4.200 4.200 0 0 1 9 3" stroke="#404040" stroke-width="1" fill="none"/></svg>
<span class="t" style="left:632.0px;top:228.9px;font-size:11.5px;line-height:11.5px;color:#000;transform:scaleX(0.9148);">Images</span>
<div class="abs " style="left:559px;top:247px;width:284px;height:270px;background:#fff;border:1px solid #8e8a80;box-shadow:1px 1px 0 #fff"></div>
<div class="abs" style="left:560px;top:248px;width:267px;height:268px;overflow:hidden">
<span class="t" style="left:-0.5px;top:-0.4px;font-size:12px;line-height:12px;color:#111;font-weight:bold;transform:scaleX(1.0102);-webkit-text-stroke:.35px #111;">Format A5</span>
<span class="t" style="left:16.0px;top:40.6px;font-size:12px;line-height:12px;color:#333;transform:scaleX(0.9634);">Page</span>
<span class="t" style="left:26.5px;top:56.9px;font-size:11.5px;line-height:11.5px;color:#333;transform:scaleX(0.9381);">1</span>
<span class="t" style="left:30.2px;top:67.9px;font-size:11.5px;line-height:11.5px;color:#000;transform:scaleX(0.9694);">1</span>
<div class="abs " style="left:66px;top:1px;width:1px;height:79px;background:#9c9c9c"></div>
<div class="abs " style="left:0px;top:79px;width:67px;height:1px;background:#a4a4a4"></div>
<span class="t" style="left:66.5px;top:-0.4px;font-size:12px;line-height:12px;color:#111;font-weight:bold;transform:scaleX(1.0102);-webkit-text-stroke:.35px #111;">Format A5</span>
<span class="t" style="left:83.0px;top:40.6px;font-size:12px;line-height:12px;color:#333;transform:scaleX(0.9634);">Page</span>
<span class="t" style="left:93.5px;top:56.9px;font-size:11.5px;line-height:11.5px;color:#333;transform:scaleX(0.9381);">2</span>
<span class="t" style="left:97.2px;top:67.9px;font-size:11.5px;line-height:11.5px;color:#000;transform:scaleX(0.9694);">2</span>
<div class="abs " style="left:133px;top:1px;width:1px;height:79px;background:#9c9c9c"></div>
<div class="abs " style="left:67px;top:79px;width:67px;height:1px;background:#a4a4a4"></div>
<span class="t" style="left:133.5px;top:-0.4px;font-size:12px;line-height:12px;color:#111;font-weight:bold;transform:scaleX(1.0102);-webkit-text-stroke:.35px #111;">Format A5</span>
<span class="t" style="left:150.0px;top:40.6px;font-size:12px;line-height:12px;color:#333;transform:scaleX(0.9634);">Page</span>
<span class="t" style="left:160.5px;top:56.9px;font-size:11.5px;line-height:11.5px;color:#333;transform:scaleX(0.9381);">3</span>
<span class="t" style="left:164.2px;top:67.9px;font-size:11.5px;line-height:11.5px;color:#000;transform:scaleX(0.9694);">3</span>
<div class="abs " style="left:200px;top:1px;width:1px;height:79px;background:#9c9c9c"></div>
<div class="abs " style="left:134px;top:79px;width:67px;height:1px;background:#a4a4a4"></div>
<span class="t" style="left:200.5px;top:-0.4px;font-size:12px;line-height:12px;color:#111;font-weight:bold;transform:scaleX(1.0102);-webkit-text-stroke:.35px #111;">Format A5</span>
<span class="t" style="left:217.0px;top:40.6px;font-size:12px;line-height:12px;color:#333;transform:scaleX(0.9634);">Page</span>
<span class="t" style="left:227.5px;top:56.9px;font-size:11.5px;line-height:11.5px;color:#333;transform:scaleX(0.9381);">4</span>
<span class="t" style="left:231.2px;top:67.9px;font-size:11.5px;line-height:11.5px;color:#000;transform:scaleX(0.9694);">4</span>
<div class="abs " style="left:267px;top:1px;width:1px;height:79px;background:#9c9c9c"></div>
<div class="abs " style="left:201px;top:79px;width:67px;height:1px;background:#a4a4a4"></div>
<span class="t" style="left:-0.5px;top:78.6px;font-size:12px;line-height:12px;color:#111;font-weight:bold;transform:scaleX(1.0102);-webkit-text-stroke:.35px #111;">Format A5</span>
<span class="t" style="left:16.0px;top:119.6px;font-size:12px;line-height:12px;color:#333;transform:scaleX(0.9634);">Page</span>
<span class="t" style="left:26.5px;top:135.9px;font-size:11.5px;line-height:11.5px;color:#333;transform:scaleX(0.9381);">5</span>
<span class="t" style="left:30.2px;top:146.9px;font-size:11.5px;line-height:11.5px;color:#000;transform:scaleX(0.9694);">5</span>
<div class="abs " style="left:66px;top:80px;width:1px;height:79px;background:#9c9c9c"></div>
<div class="abs " style="left:0px;top:158px;width:67px;height:1px;background:#a4a4a4"></div>
<span class="t" style="left:66.5px;top:78.6px;font-size:12px;line-height:12px;color:#111;font-weight:bold;transform:scaleX(1.0102);-webkit-text-stroke:.35px #111;">Format A5</span>
<span class="t" style="left:83.0px;top:119.6px;font-size:12px;line-height:12px;color:#333;transform:scaleX(0.9634);">Page</span>
<span class="t" style="left:93.5px;top:135.9px;font-size:11.5px;line-height:11.5px;color:#333;transform:scaleX(0.9381);">6</span>
<span class="t" style="left:97.2px;top:146.9px;font-size:11.5px;line-height:11.5px;color:#000;transform:scaleX(0.9694);">6</span>
<div class="abs " style="left:133px;top:80px;width:1px;height:79px;background:#9c9c9c"></div>
<div class="abs " style="left:67px;top:158px;width:67px;height:1px;background:#a4a4a4"></div>
<div class="abs " style="left:134px;top:80px;width:66px;height:66px;background:#c4c4c4"></div>
<span class="t" style="left:164.2px;top:146.9px;font-size:11.5px;line-height:11.5px;color:#000;transform:scaleX(0.9694);">7</span>
<div class="abs " style="left:200px;top:80px;width:1px;height:79px;background:#9c9c9c"></div>
<div class="abs " style="left:134px;top:158px;width:67px;height:1px;background:#a4a4a4"></div>
<div class="abs " style="left:201px;top:80px;width:66px;height:66px;background:#c4c4c4"></div>
<span class="t" style="left:231.2px;top:146.9px;font-size:11.5px;line-height:11.5px;color:#000;transform:scaleX(0.9694);">8</span>
<div class="abs " style="left:267px;top:80px;width:1px;height:79px;background:#9c9c9c"></div>
<div class="abs " style="left:201px;top:158px;width:67px;height:1px;background:#a4a4a4"></div>
<div class="abs " style="left:0px;top:159px;width:66px;height:66px;background:#c4c4c4"></div>
<span class="t" style="left:30.2px;top:226.2px;font-size:11.5px;line-height:11.5px;color:#000;transform:scaleX(0.9694);">9</span>
<div class="abs " style="left:66px;top:159px;width:1px;height:80px;background:#9c9c9c"></div>
<div class="abs " style="left:0px;top:238px;width:67px;height:1px;background:#a4a4a4"></div>
<div class="abs " style="left:67px;top:159px;width:66px;height:66px;background:#c4c4c4"></div>
<span class="t" style="left:94.1px;top:226.2px;font-size:11.5px;line-height:11.5px;color:#000;transform:scaleX(0.9694);">10</span>
<div class="abs " style="left:133px;top:159px;width:1px;height:80px;background:#9c9c9c"></div>
<div class="abs " style="left:67px;top:238px;width:67px;height:1px;background:#a4a4a4"></div>
<div class="abs " style="left:134px;top:159px;width:66px;height:66px;background:#c4c4c4"></div>
<span class="t" style="left:161.1px;top:226.2px;font-size:11.5px;line-height:11.5px;color:#000;transform:scaleX(1.0387);">11</span>
<div class="abs " style="left:200px;top:159px;width:1px;height:80px;background:#9c9c9c"></div>
<div class="abs " style="left:134px;top:238px;width:67px;height:1px;background:#a4a4a4"></div>
<div class="abs " style="left:201px;top:159px;width:66px;height:66px;background:#c4c4c4"></div>
<span class="t" style="left:228.1px;top:226.2px;font-size:11.5px;line-height:11.5px;color:#000;transform:scaleX(0.9694);">12</span>
<div class="abs " style="left:267px;top:159px;width:1px;height:80px;background:#9c9c9c"></div>
<div class="abs " style="left:201px;top:238px;width:67px;height:1px;background:#a4a4a4"></div>
<div class="abs " style="left:0px;top:239px;width:66px;height:66px;background:#c4c4c4"></div>
<span class="t" style="left:27.1px;top:305.9px;font-size:11.5px;line-height:11.5px;color:#000;transform:scaleX(0.9694);">13</span>
<div class="abs " style="left:66px;top:239px;width:1px;height:79px;background:#9c9c9c"></div>
<div class="abs " style="left:0px;top:317px;width:67px;height:1px;background:#a4a4a4"></div>
<div class="abs " style="left:67px;top:239px;width:66px;height:66px;background:#c4c4c4"></div>
<span class="t" style="left:94.1px;top:305.9px;font-size:11.5px;line-height:11.5px;color:#000;transform:scaleX(0.9694);">14</span>
<div class="abs " style="left:133px;top:239px;width:1px;height:79px;background:#9c9c9c"></div>
<div class="abs " style="left:67px;top:317px;width:67px;height:1px;background:#a4a4a4"></div>
<div class="abs " style="left:134px;top:239px;width:66px;height:66px;background:#c4c4c4"></div>
<span class="t" style="left:161.1px;top:305.9px;font-size:11.5px;line-height:11.5px;color:#000;transform:scaleX(0.9694);">15</span>
<div class="abs " style="left:200px;top:239px;width:1px;height:79px;background:#9c9c9c"></div>
<div class="abs " style="left:134px;top:317px;width:67px;height:1px;background:#a4a4a4"></div>
<div class="abs " style="left:201px;top:239px;width:66px;height:66px;background:#c4c4c4"></div>
<span class="t" style="left:228.1px;top:305.9px;font-size:11.5px;line-height:11.5px;color:#000;transform:scaleX(0.9694);">16</span>
<div class="abs " style="left:267px;top:239px;width:1px;height:79px;background:#9c9c9c"></div>
<div class="abs " style="left:201px;top:317px;width:67px;height:1px;background:#a4a4a4"></div>
</div>
<div class="abs " style="left:560px;top:248px;width:67px;height:80px;border:1px solid #4a7ce8;box-shadow:inset 0 0 0 1px rgba(74,124,232,.3)"></div>
<div class="abs " style="left:827px;top:249px;width:15px;height:267px;background:#eae8e3"></div>
<div class="abs btn" style="left:827px;top:249px;width:15px;height:14px;"></div>
<svg style="left:831px;top:254px" width="7" height="4" viewBox="0 0 7 4"><path d="M0 4h7L3.500 .5z" fill="#000"/></svg>
<div class="abs btn" style="left:827px;top:263px;width:15px;height:80px;"></div>
<div class="abs btn" style="left:827px;top:502px;width:15px;height:14px;"></div>
<svg style="left:831px;top:507px" width="7" height="4" viewBox="0 0 7 4"><path d="M0 0h7L3.500 3.500z" fill="#000"/></svg>
<svg style="left:728px;top:404px" width="17" height="18" viewBox="0 0 17 18"><path d="M6.500 2.300C6.500 .8 9.300 .8 9.300 2.300V6C10.500 5.600 11.500 6 11.600 6.800 12.600 6.500 13.500 7 13.600 7.800 14.800 7.600 15.800 8.300 15.800 9.500 15.800 12 14.500 14 14 16.300H6.800C5.500 13.500 3 11.500 1.500 9.500 .8 8.300 2 7 3.200 7.800L6.500 10.300z" fill="#fff" stroke="#1a1a1a" stroke-width="1.100" stroke-linejoin="round"/></svg>
<span class="t" style="left:558.7px;top:525.9px;font-size:11.5px;line-height:11.5px;color:#000;transform:scaleX(0.9799);">1 of 40 page(s) selected</span>
<span class="t" style="left:572.0px;top:550.4px;font-size:11.5px;line-height:11.5px;color:#000;transform:scaleX(0.9035);"><u>T</u>humbnail Size:</span>
<div class="abs sunk" style="left:651px;top:546px;width:69px;height:19px;"></div><div class="abs btn" style="left:704px;top:548px;width:15px;height:16px;"></div><svg style="left:708px;top:555px" width="7" height="4" viewBox="0 0 7 4"><path d="M0 0h7L3.500 3.500z" fill="#000"/></svg><span class="t" style="left:656.5px;top:550.9px;font-size:11.5px;line-height:11.5px;color:#000;transform:scaleX(0.8520);">Small</span>
<div class="abs grp" style="left:866px;top:216px;width:282px;height:83px;"></div><div class="abs " style="left:880.7px;top:215px;width:72.5px;height:3px;background:#ededed"></div><span class="t" style="left:883.7px;top:209.9px;font-size:11.5px;line-height:11.5px;color:#000;transform:scaleX(0.9399);">Page Options</span>
<span class="t" style="left:902.4px;top:231.9px;font-size:11.5px;line-height:11.5px;color:#000;transform:scaleX(0.9034);"><u>N</u>ame:</span>
<div class="abs sunk" style="left:941px;top:228px;width:162px;height:18px;"></div><span class="t" style="left:946.0px;top:231.9px;font-size:11.5px;line-height:11.5px;color:#000;transform:scaleX(0.9570);">A5-Test_40_Pages</span>
<span class="t" style="left:891.0px;top:257.4px;font-size:11.5px;line-height:11.5px;color:#000;transform:scaleX(0.9710);"><u>C</u>rop To:</span>
<div class="abs sunk" style="left:938px;top:253px;width:98px;height:19px;"></div><div class="abs btn" style="left:1020px;top:255px;width:15px;height:16px;"></div><svg style="left:1024px;top:262px" width="7" height="4" viewBox="0 0 7 4"><path d="M0 0h7L3.500 3.500z" fill="#000"/></svg><span class="t" style="left:943.5px;top:257.9px;font-size:11.5px;line-height:11.5px;color:#000;transform:scaleX(0.9328);">Bounding Box</span>
<div class="abs chk" style="left:874px;top:280px;width:12px;height:12px;"></div><svg style="left:876px;top:282px" width="8" height="8" viewBox="0 0 8 8"><path d="M.5 3l2.500 2.500L7.500 1" stroke="#000" stroke-width="1.900" fill="none"/></svg>
<span class="t" style="left:890.0px;top:280.9px;font-size:11.5px;line-height:11.5px;color:#000;transform:scaleX(0.8903);"><u>A</u>nti-aliased</span>
<div class="abs grp" style="left:866px;top:316px;width:280px;height:163px;"></div><div class="abs " style="left:877.4px;top:315px;width:97px;height:3px;background:#ededed"></div><span class="t" style="left:880.4px;top:309.9px;font-size:11.5px;line-height:11.5px;color:#000;transform:scaleX(0.9387);">Image Size: 3,96M</span>
<span class="t" style="left:901.0px;top:331.9px;font-size:11.5px;line-height:11.5px;color:#000;transform:scaleX(0.9819);"><u>W</u>idth:</span>
<div class="abs sunk" style="left:941px;top:328px;width:74px;height:18px;"></div><span class="t" style="left:946.0px;top:331.9px;font-size:11.5px;line-height:11.5px;color:#000;transform:scaleX(1.0146);">93,62</span>
<div class="abs sunk" style="left:1023px;top:327px;width:89px;height:19px;"></div><div class="abs btn" style="left:1096px;top:329px;width:15px;height:16px;"></div><svg style="left:1100px;top:336px" width="7" height="4" viewBox="0 0 7 4"><path d="M0 0h7L3.500 3.500z" fill="#000"/></svg><span class="t" style="left:1028.5px;top:331.9px;font-size:11.5px;line-height:11.5px;color:#000;transform:scaleX(0.9009);">Millimeters</span>
<span class="t" style="left:898.0px;top:357.9px;font-size:11.5px;line-height:11.5px;color:#000;transform:scaleX(0.9605);"><u>H</u>eight:</span>
<div class="abs sunk" style="left:941px;top:355px;width:74px;height:17px;"></div><span class="t" style="left:946.0px;top:358.4px;font-size:11.5px;line-height:11.5px;color:#000;transform:scaleX(0.9950);">105,81</span>
<div class="abs sunk" style="left:1023px;top:354px;width:89px;height:19px;"></div><div class="abs btn" style="left:1096px;top:356px;width:15px;height:16px;"></div><svg style="left:1100px;top:363px" width="7" height="4" viewBox="0 0 7 4"><path d="M0 0h7L3.500 3.500z" fill="#000"/></svg><span class="t" style="left:1028.5px;top:358.9px;font-size:11.5px;line-height:11.5px;color:#000;transform:scaleX(0.9009);">Millimeters</span>
<div class="abs " style="left:1119px;top:339px;width:9px;height:27px;border:1px solid #808080;border-left:none;box-shadow:1px 1px 0 #fff"></div>
<svg style="left:1132px;top:346px" width="8" height="12" viewBox="0 0 8 12" fill="none"><path d="M1 5V3.700a2.700 2.700 0 0 1 5.400 0V5M1 7v1.300a2.700 2.700 0 0 0 5.400 0V7" stroke="#111" stroke-width="1.400"/><path d="M3.700 3.500v5" stroke="#111" stroke-width="1.400"/></svg>
<div class="abs chk" style="left:874px;top:380px;width:12px;height:12px;"></div><svg style="left:876px;top:382px" width="8" height="8" viewBox="0 0 8 8"><path d="M.5 3l2.500 2.500L7.500 1" stroke="#000" stroke-width="1.900" fill="none"/></svg>
<span class="t" style="left:890.0px;top:380.9px;font-size:11.5px;line-height:11.5px;color:#000;transform:scaleX(0.9225);">Constrain <u>P</u>roportions</span>
<span class="t" style="left:880.4px;top:403.9px;font-size:11.5px;line-height:11.5px;color:#000;transform:scaleX(0.9142);"><u>R</u>esolution:</span>
<div class="abs sunk" style="left:941px;top:400px;width:49px;height:18px;"></div><span class="t" style="left:946.0px;top:403.9px;font-size:11.5px;line-height:11.5px;color:#000;transform:scaleX(1.0006);">300</span>
<div class="abs sunk" style="left:999px;top:399px;width:115px;height:19px;"></div><div class="abs btn" style="left:1098px;top:401px;width:15px;height:16px;"></div><svg style="left:1102px;top:408px" width="7" height="4" viewBox="0 0 7 4"><path d="M0 0h7L3.500 3.500z" fill="#000"/></svg><span class="t" style="left:1004.5px;top:403.9px;font-size:11.5px;line-height:11.5px;color:#000;transform:scaleX(0.9351);">Pixels/Inch</span>
<span class="t" style="left:903.6px;top:430.4px;font-size:11.5px;line-height:11.5px;color:#000;transform:scaleX(0.9198);"><u>M</u>ode:</span>
<div class="abs sunk" style="left:938px;top:426px;width:124px;height:19px;"></div><div class="abs btn" style="left:1046px;top:428px;width:15px;height:16px;"></div><svg style="left:1050px;top:435px" width="7" height="4" viewBox="0 0 7 4"><path d="M0 0h7L3.500 3.500z" fill="#000"/></svg><span class="t" style="left:943.5px;top:430.9px;font-size:11.5px;line-height:11.5px;color:#000;transform:scaleX(0.8543);">RGB Color</span>
<span class="t" style="left:883.7px;top:456.9px;font-size:11.5px;line-height:11.5px;color:#000;transform:scaleX(0.9763);"><u>B</u>it Depth:</span>
<div class="abs sunk" style="left:938px;top:452px;width:58px;height:19px;"></div><div class="abs btn" style="left:980px;top:454px;width:15px;height:16px;"></div><svg style="left:984px;top:461px" width="7" height="4" viewBox="0 0 7 4"><path d="M0 0h7L3.500 3.500z" fill="#000"/></svg><span class="t" style="left:943.5px;top:456.9px;font-size:11.5px;line-height:11.5px;color:#000;transform:scaleX(1.0351);">8 bit</span>
<div class="abs chk" style="left:865px;top:488px;width:12px;height:12px;"></div>
<span class="t" style="left:880.4px;top:488.9px;font-size:11.5px;line-height:11.5px;color:#000;transform:scaleX(0.9187);">S<u>u</u>ppress Warnings</span>
<div class="abs " style="left:1002px;top:557px;width:70px;height:18px;background:#000;box-shadow:1px 1px 0 #fff"></div>
<div class="abs btn" style="left:1003px;top:558px;width:68px;height:16px;"></div>
<span class="t" style="left:1030.0px;top:560.4px;font-size:11.5px;line-height:11.5px;color:#000;transform:scaleX(0.8426);">OK</span>
<div class="abs btn" style="left:1079px;top:557px;width:69px;height:18px;box-shadow:inset -1px -1px 0 #808080,inset 1px 1px 0 #d4d0c8,1px 1px 0 #fff"></div>
<span class="t" style="left:1097.0px;top:560.4px;font-size:11.5px;line-height:11.5px;color:#000;transform:scaleX(0.8939);">Cancel</span>
<div class="abs " style="left:0px;top:877px;width:1263px;height:6px;background:#fff"></div>
<div class="abs " style="left:0px;top:877px;width:1263px;height:1px;background:#6e6e6e"></div>
<div class="abs " style="left:0px;top:878px;width:1263px;height:1px;background:#b5b5b5"></div>
<div class="abs " style="left:1462px;top:877px;width:38px;height:6px;background:#fff"></div>
<div class="abs " style="left:1462px;top:877px;width:38px;height:1px;background:#6e6e6e"></div>
<div class="abs " style="left:1462px;top:878px;width:38px;height:1px;background:#b5b5b5"></div>
<div class="abs " style="left:0px;top:879px;width:12px;height:4px;background:#e8e6e0"></div>
<div class="abs " style="left:12px;top:879px;width:2px;height:4px;background:#0a0a6a"></div>
<div class="abs " style="left:16px;top:880px;width:6px;height:3px;background:#b8c8e8"></div>
<div class="abs " style="left:204px;top:879px;width:2px;height:4px;background:#aaa"></div>
<div class="abs " style="left:206px;top:879px;width:13px;height:4px;background:#f4f4f4"></div>
<div class="abs " style="left:219px;top:879px;width:3px;height:4px;background:#0a0a8a"></div>
<div class="abs " style="left:224px;top:879px;width:3px;height:4px;background:#444"></div>
<div class="abs " style="left:233px;top:880px;width:8px;height:3px;background:#c4d0e8"></div>
<div class="abs " style="left:228px;top:881px;width:456px;height:2px;background:#d8d4cc"></div>
<div class="abs " style="left:683px;top:879px;width:2px;height:4px;background:#c8c4bc"></div>
<div class="abs" style="left:38px;top:880px;width:120px;height:3px;overflow:hidden"><span class="t" style="left:0.0px;top:0.6px;font-size:11px;line-height:11px;color:#222;transform:scaleX(1.1222);">{AI4AFl.l.t..}  Forter...t</span></div>
</div>
</body>
</html>
